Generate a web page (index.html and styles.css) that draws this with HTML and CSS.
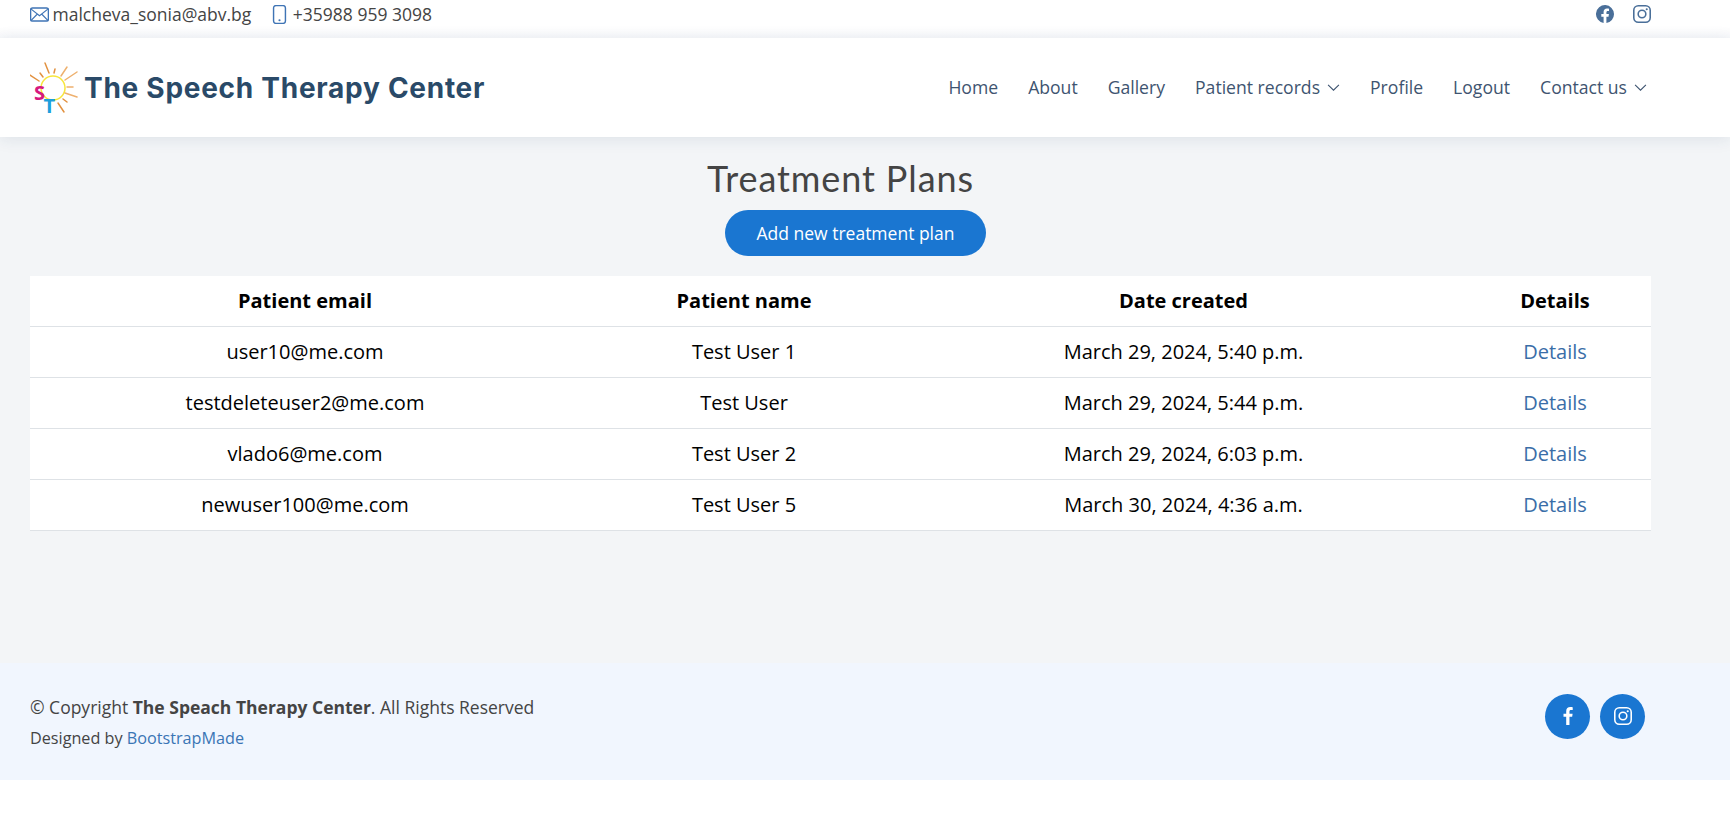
FILE: index.html
```html
<!DOCTYPE html>
<html>
<head>
    <title>Treatment Plans</title>
    <link rel="stylesheet" href="styles.css">
</head>
<body>
    <div class="topbar">
        <div class="contact-info">
            <span class="contact-item">
                <svg class="top-icon" viewBox="0 0 16 16"><rect x="0.5" y="2.5" width="15" height="11" rx="1.5" fill="none" stroke="currentColor" stroke-width="1.2"/><path d="M1 3.5l7 5.5 7-5.5M1 13l5.2-5.4M15 13L9.8 7.6" fill="none" stroke="currentColor"/></svg>
                <span>malcheva_sonia@abv.bg</span>
            </span>
            <span class="contact-item">
                <svg class="top-icon" viewBox="0 0 16 16"><rect x="3" y="0.5" width="10" height="15" rx="2" fill="none" stroke="currentColor" stroke-width="1.2"/><circle cx="8" cy="12.8" r="0.9" fill="currentColor"/></svg>
                <span>+35988 959 3098</span>
            </span>
        </div>
        <div class="top-social">
            <svg class="social-icon" viewBox="0 0 16 16"><path fill="currentColor" d="M16 8.05A8 8 0 1 0 6.75 16v-5.63H4.72V8.05h2.03V6.28c0-2 1.2-3.12 3.02-3.12.88 0 1.8.16 1.8.16v1.97h-1.01c-1 0-1.31.62-1.31 1.26v1.5h2.22l-.35 2.32H9.25V16A8 8 0 0 0 16 8.05z"/></svg>
            <svg class="social-icon" viewBox="0 0 16 16"><rect x="0.7" y="0.7" width="14.6" height="14.6" rx="4" fill="none" stroke="currentColor" stroke-width="1.4"/><circle cx="8" cy="8" r="3.4" fill="none" stroke="currentColor" stroke-width="1.4"/><circle cx="12.2" cy="3.8" r="0.95" fill="currentColor"/></svg>
        </div>
    </div>

    <header class="header">
        <div class="logo">
            <svg class="logo-mark" viewBox="0 -6 50 62">
                <circle cx="23" cy="25" r="12" fill="none" stroke="#f7e63c" stroke-width="1.5"/>
                <g stroke-width="1.5" stroke-linecap="round">
                    <path d="M15 0l4 10" stroke="#e2913f"/>
                    <path d="M10 10l3 4" stroke="#e2913f"/>
                    <path d="M0 12l9 6" stroke="#e2913f"/>
                    <path d="M25 6l-1 4" stroke="#e2913f"/>
                    <path d="M37 4l-6 9" stroke="#eeb06e"/>
                    <path d="M47 9l-12 8" stroke="#eeb06e"/>
                    <path d="M37 24h6" stroke="#eeb06e"/>
                    <path d="M35 30l12 4" stroke="#eeb06e"/>
                    <path d="M33 36l4 3" stroke="#e2913f"/>
                    <path d="M28 40l6 9" stroke="#e2913f"/>
                </g>
                <text class="logo-s" x="4" y="37">S</text>
                <text class="logo-t" x="13.5" y="50">T</text>
            </svg>
            <span class="logo-name">The Speech Therapy Center</span>
        </div>
        <nav class="nav">
            <a href="#">Home</a>
            <a href="#">About</a>
            <a href="#">Gallery</a>
            <a href="#">Patient records <svg class="chevron" viewBox="0 0 12 12"><path d="M1 3.5l5 5 5-5" fill="none" stroke="currentColor"/></svg></a>
            <a href="#">Profile</a>
            <a href="#">Logout</a>
            <a href="#">Contact us <svg class="chevron" viewBox="0 0 12 12"><path d="M1 3.5l5 5 5-5" fill="none" stroke="currentColor"/></svg></a>
        </nav>
    </header>

    <main class="main">
        <h1>Treatment Plans</h1>
        <a class="add-btn" href="#">Add new treatment plan</a>
        <table class="plans">
            <thead>
                <tr>
                    <th class="col-email">Patient email</th>
                    <th class="col-name">Patient name</th>
                    <th class="col-date">Date created</th>
                    <th>Details</th>
                </tr>
            </thead>
            <tbody>
                <tr>
                    <td>user10@me.com</td>
                    <td>Test User 1</td>
                    <td>March 29, 2024, 5:40 p.m.</td>
                    <td><a href="#">Details</a></td>
                </tr>
                <tr>
                    <td>testdeleteuser2@me.com</td>
                    <td>Test User</td>
                    <td>March 29, 2024, 5:44 p.m.</td>
                    <td><a href="#">Details</a></td>
                </tr>
                <tr>
                    <td>vlado6@me.com</td>
                    <td>Test User 2</td>
                    <td>March 29, 2024, 6:03 p.m.</td>
                    <td><a href="#">Details</a></td>
                </tr>
                <tr>
                    <td>newuser100@me.com</td>
                    <td>Test User 5</td>
                    <td>March 30, 2024, 4:36 a.m.</td>
                    <td><a href="#">Details</a></td>
                </tr>
            </tbody>
        </table>
    </main>

    <footer class="footer">
        <div class="footer-text">
            <div class="copyright">© Copyright <strong>The Speach Therapy Center</strong>. All Rights Reserved</div>
            <div class="credits">Designed by <a href="#">BootstrapMade</a></div>
        </div>
        <div class="footer-social">
            <a href="#"><svg viewBox="0 0 16 16"><path fill="currentColor" d="M9.3 16V8.7h2.4l.4-2.8H9.3V4.1c0-.8.2-1.4 1.4-1.4h1.5V.2C11.9.1 11 0 10 0 7.9 0 6.4 1.3 6.4 3.7v2.2H4v2.8h2.4V16z"/></svg></a>
            <a href="#"><svg viewBox="0 0 16 16"><rect x="0.7" y="0.7" width="14.6" height="14.6" rx="4" fill="none" stroke="currentColor" stroke-width="1.4"/><circle cx="8" cy="8" r="3.4" fill="none" stroke="currentColor" stroke-width="1.4"/><circle cx="12.2" cy="3.8" r="0.95" fill="currentColor"/></svg></a>
        </div>
    </footer>
</body>
</html>
```

FILE: styles.css
```css
body {
    margin: 0;
    font-family: "Open Sans", sans-serif;
    color: #444444;
    background: #ffffff;
}

a {
    text-decoration: none;
}

.topbar {
    height: 38px;
    padding: 0 79px 0 30px;
    display: flex;
    justify-content: space-between;
    align-items: flex-start;
    background: linear-gradient(#ffffff 70%, #f8f9fb);
    font-size: 17.5px;
    line-height: 28px;
}

.contact-info {
    display: flex;
    gap: 19px;
}

.contact-item {
    display: flex;
    align-items: center;
    gap: 3.5px;
}

.top-icon {
    width: 19px;
    height: 19px;
    color: #3f74b5;
}

.top-social {
    display: flex;
    gap: 19px;
    padding: 5px 0 0;
}

.social-icon {
    width: 18px;
    height: 18px;
    color: #4a6f99;
}

.header {
    height: 99px;
    padding: 0 83px 0 30px;
    display: flex;
    justify-content: space-between;
    align-items: center;
    background: #ffffff;
    box-shadow: 0 2px 15px rgba(25, 60, 100, 0.1);
    position: relative;
}

.logo {
    display: flex;
    align-items: center;
    gap: 4px;
}

.logo-mark {
    width: 50px;
    height: 62px;
}

.logo-s {
    font: 700 20px "Open Sans", sans-serif;
    fill: #d6187f;
}

.logo-t {
    font: 700 20px "Open Sans", sans-serif;
    fill: #1e9fdc;
}

.logo-name {
    font-family: Inter, sans-serif;
    font-weight: 700;
    font-size: 28px;
    letter-spacing: 0.73px;
    color: #2a4a68;
}

.nav {
    display: flex;
    gap: 30px;
    font-size: 17.6px;
    margin-top: -1px;
}

.nav a {
    color: #3e5470;
    display: flex;
    align-items: center;
    gap: 7px;
}

.chevron {
    width: 13px;
    height: 13px;
}

.main {
    background: #f3f5f7;
    height: 526px;
    padding: 0 79px 0 30px;
    display: flex;
    flex-direction: column;
    align-items: center;
}

h1 {
    margin: 20px 0 0;
    font-family: Lato, sans-serif;
    font-weight: 400;
    font-size: 36px;
    line-height: 43px;
    letter-spacing: 0.9px;
    color: #444444;
}

.add-btn {
    margin: 10px 0 0 30px;
    padding: 0 31.5px;
    height: 46px;
    line-height: 46px;
    border-radius: 23px;
    background: #1a76d1;
    color: #ffffff;
    font-size: 17.5px;
}

.plans {
    margin-top: 20px;
    width: 100%;
    border-collapse: collapse;
    background: #ffffff;
    table-layout: fixed;
    font-size: 20px;
    color: #000000;
}

.col-email {
    width: 550px;
}

.col-name {
    width: 328px;
}

.col-date {
    width: 551px;
}

.plans th,
.plans td {
    height: 48px;
    padding: 0 0 2px;
    text-align: center;
    border-bottom: 1px solid #dee2e6;
}

.plans th {
    font-weight: 700;
}

.plans a {
    color: #3a6ea8;
}

.footer {
    height: 117px;
    padding: 0 85px 0 30px;
    display: flex;
    justify-content: space-between;
    align-items: center;
    background: #f1f6fe;
}

.footer-text {
    padding-top: 3px;
}

.copyright {
    font-size: 17.5px;
    line-height: 30px;
}

.credits {
    font-size: 16.2px;
    line-height: 32px;
}

.credits a {
    color: #3a75b5;
}

.footer-social {
    display: flex;
    gap: 10px;
    margin-top: -11px;
}

.footer-social a {
    width: 45px;
    height: 45px;
    border-radius: 50%;
    background: #1a76d1;
    color: #ffffff;
    display: flex;
    align-items: center;
    justify-content: center;
}

.footer-social svg {
    width: 18px;
    height: 18px;
}
```
